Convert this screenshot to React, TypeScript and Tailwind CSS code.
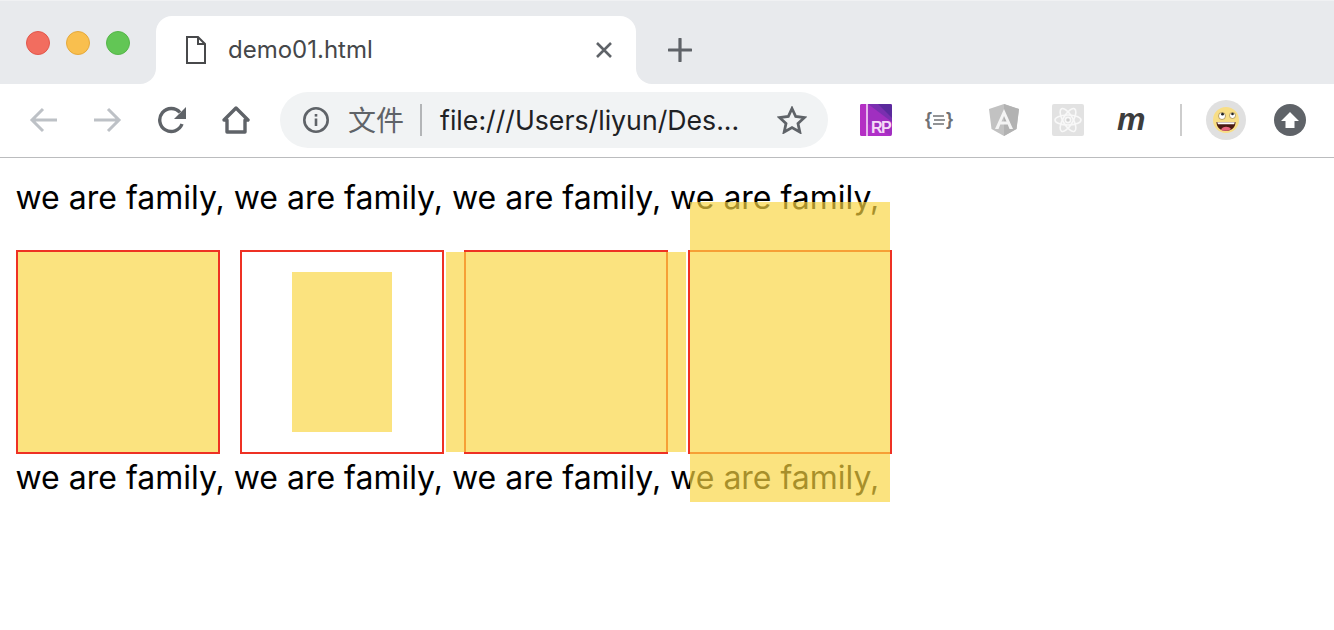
import React from "react";

const ui = "font-['Inter','Noto_Sans_CJK_SC',sans-serif]";

function Traffic({ c, b }: { c: string; b: string }) {
  return <div className="w-6 h-6 rounded-full border" style={{ backgroundColor: c, borderColor: b }} />;
}

function Box({ children }: { children?: React.ReactNode }) {
  return <div className="w-[204px] h-[204px] border-2 border-[#ee3124] shrink-0">{children}</div>;
}

const Y = "relative bg-[rgba(249,213,64,0.67)]";
const LINE = "we are family, we are family, we are family, we are family,";

export default function App() {
  return (
    <div className="w-[1334px] h-[630px] bg-white overflow-hidden font-['Inter','Noto_Sans_CJK_SC',sans-serif]">
      {/* tab strip */}
      <div className="flex h-[84px] bg-white">
        <div className="w-[156px] h-full bg-[#e8eaed] border-t border-[#f0f1f3] rounded-br-2xl flex items-start pl-[26px] pt-[30px] gap-4">
          <Traffic c="#f26d5f" b="#e2574b" />
          <Traffic c="#f9bf4e" b="#e5a93c" />
          <Traffic c="#62c655" b="#55b649" />
        </div>
        <div className="w-[480px] h-full bg-[#e8eaed] border-t border-[#f0f1f3] pt-[15px]">
          <div className="h-[68px] bg-white rounded-t-2xl flex items-center pl-[30px] pr-[24px]">
            <svg width="20" height="28" viewBox="0 0 20 28" fill="none" stroke="#48494b" strokeWidth="2">
              <path d="M1 1h11l7 7v19H1z" />
              <path d="M12 1v7h7" />
            </svg>
            <span className={`ml-[22px] text-[24px] leading-none text-[#45474a] flex-1 ${ui}`}>demo01.html</span>
            <svg width="16" height="16" viewBox="0 0 16 16" stroke="#5f6368" strokeWidth="2.6">
              <path d="M1 1l14 14M15 1L1 15" />
            </svg>
          </div>
        </div>
        <div className="flex-1 h-full bg-[#e8eaed] border-t border-[#f0f1f3] rounded-bl-2xl pl-[32px] pt-[37px]">
          <svg width="24" height="24" viewBox="0 0 24 24" stroke="#5f6368" strokeWidth="3.2" strokeLinecap="round">
            <path d="M12 1v22M1 12h22" />
          </svg>
        </div>
      </div>

      {/* toolbar */}
      <div className={`h-[74px] pb-[2px] border-b border-[#bbbcbe] flex items-center ${ui}`}>
        <div className="ml-[29px] w-7 flex justify-center">
          <svg width="28" height="26" viewBox="0 0 28 26" fill="none" stroke="#bdc1c6" strokeWidth="3" >
            <path d="M28 13H3M14 2L3 13l11 11" />
          </svg>
        </div>
        <div className="ml-[37px] w-7 flex justify-center">
          <svg width="28" height="26" viewBox="0 0 28 26" fill="none" stroke="#bdc1c6" strokeWidth="3">
            <path d="M0 13h25M14 2l11 11-11 11" />
          </svg>
        </div>
        <div className="ml-[36px]">
          <svg width="28" height="28" viewBox="0 0 28 28" fill="none">
            <path d="M24 18a11.5 11.5 0 1 1-2-11.5" stroke="#5f6368" strokeWidth="3.4" />
            <path d="M28 1v12H16z" fill="#5f6368" />
          </svg>
        </div>
        <div className="ml-9">
          <svg width="28" height="28" viewBox="0 0 28 28" fill="none" stroke="#5f6368" strokeWidth="3.4" strokeLinejoin="round">
            <path d="M2 14L14 2l12 12h-3v12H5V14z" />
          </svg>
        </div>
        <div className="ml-[30px] w-[548px] h-14 rounded-full bg-[#f1f3f4] flex items-center pl-[23px]">
          <svg width="26" height="26" viewBox="0 0 26 26" fill="none" stroke="#5f6368" strokeWidth="2.6">
            <circle cx="13" cy="13" r="11.7" />
            <path d="M13 11.5V19" />
            <path d="M13 7v2.6" />
          </svg>
          <span className="ml-[19px] -mt-[1px] text-[28px] leading-none text-[#5f6368] font-['Noto_Sans_CJK_SC',sans-serif]">文件</span>
          <div className="ml-[16px] w-[2px] h-8 bg-[#b3b5b7]" />
          <span className="ml-[18px] mt-[1px] text-[26.700px] leading-none text-[#202124] flex-1 whitespace-nowrap">file:///Users/liyun/Des...</span>
          <svg className="mr-[21px]" width="30" height="28" viewBox="0 0 30 28" fill="none" stroke="#5f6368" strokeWidth="2.8">
            <path d="M15 2.5l3.7 8 8.8 1-6.500 6 1.800 8.500-7.800-4.400-7.800 4.400 1.800-8.500-6.500-6 8.800-1z" />
          </svg>
        </div>
        <div className="ml-8 w-8 h-8 rounded-[2px] overflow-hidden">
          <svg width="32" height="32" viewBox="0 0 32 32">
            <rect width="32" height="32" fill="#a02fc0" />
            <rect width="6" height="32" fill="#b42fc4" />
            <rect x="6" width="2" height="32" fill="#e6b9ec" />
            <path d="M8 0h24v18z" fill="#7a2fb0" />
            <path d="M18 0h14v14z" fill="#5a2a9c" />
            <path d="M8 20l24 12H8z" fill="#b030c8" />
            <text x="11" y="29" fontSize="16" fontWeight="700" fill="#f4dbf7" letterSpacing="-1.500" fontFamily="Liberation Sans">RP</text>
          </svg>
        </div>
        <div className="ml-[33px] w-[28px] flex items-center justify-center">
          <span className="text-[18px] leading-none font-bold text-[#6f7174] font-['Liberation_Sans',sans-serif] -mt-[2px]">{"{"}</span>
          <svg width="12" height="12" viewBox="0 0 12 12" fill="none" stroke="#6f7174" strokeWidth="1.500" className="mx-[1px]">
            <path d="M0 2h11M1 6h11M0 10h11" />
          </svg>
          <span className="text-[18px] leading-none font-bold text-[#6f7174] font-['Liberation_Sans',sans-serif] -mt-[2px]">{"}"}</span>
        </div>
        <div className="ml-[36px] w-[30px] flex items-center justify-center">
          <svg width="30" height="32" viewBox="0 0 30 32">
            <path d="M15 0L0 5l2.500 20L15 32l12.500-7L30 5z" fill="#c2c2c2" />
            <path d="M15 0v32l12.500-7L30 5z" fill="#b2b2b2" />
            <path d="M15 5L6 25h3.500l1.800-4.500h7.400L20.500 25H24zm-2.500 12.500L15 12l2.500 5.500z" fill="#f4f4f4" />
          </svg>
        </div>
        <div className="ml-[33px] w-8 h-8 rounded-[2px] bg-[#e2e2e2] flex items-center justify-center">
          <svg width="28" height="26" viewBox="0 0 28 26" fill="none" stroke="#f8f8f8" strokeWidth="1.6">
            <ellipse cx="14" cy="13" rx="13" ry="5" />
            <ellipse cx="14" cy="13" rx="13" ry="5" transform="rotate(60 14 13)" />
            <ellipse cx="14" cy="13" rx="13" ry="5" transform="rotate(120 14 13)" />
            <circle cx="14" cy="13" r="2.600" fill="#d0d0d0" stroke="#f8f8f8" />
          </svg>
        </div>
        <span className="ml-[33px] w-[30px] text-[32px] leading-none font-bold italic text-[#3d3d3d] font-['Liberation_Sans',sans-serif] -mt-[2px]">m</span>
        <div className="ml-[33px] w-[2px] h-8 bg-[#cdcdcd]" />
        <div className="ml-[24px] w-10 h-10 rounded-full bg-[#e0e0e0] flex items-center justify-center">
          <svg width="26" height="26" viewBox="0 0 26 26">
            <circle cx="13" cy="13" r="13" fill="#f8de86" />
            <circle cx="9" cy="9" r="3.500" fill="#fff" stroke="#8a6a20" strokeWidth="0.6" />
            <circle cx="19.500" cy="8.500" r="3" fill="#fff" stroke="#8a6a20" strokeWidth="0.6" />
            <circle cx="9.500" cy="7.200" r="1.400" fill="#222" />
            <circle cx="19.500" cy="7" r="1.300" fill="#222" />
            <path d="M3.500 15h19c0 5.500-4 9-9.500 9s-9.500-3.500-9.500-9z" fill="#4a1a12" />
            <path d="M4.200 15.300h17.600l-.6 2H5z" fill="#fff" />
            <path d="M8 23c1-4 8-4 10-1-2 2-7 2.500-10 1z" fill="#e9647c" />
          </svg>
        </div>
        <div className="ml-[28px] w-8 h-8 rounded-full bg-[#5f6368] flex items-center justify-center">
          <svg width="18" height="16" viewBox="0 0 18 16">
            <path d="M9 0l9 9h-4.500v7h-9V9H0z" fill="#fff" />
          </svg>
        </div>
      </div>

      {/* page */}
      <div className="pt-4 text-black">
        <div className="h-[46px] leading-[48px] pl-[15.500px] text-[32px] whitespace-nowrap">{LINE}</div>
        <div className="flex gap-5 pl-4 mt-[30px]">
          <Box>
            <div className={`w-[200px] h-[200px] ${Y}`} />
          </Box>
          <Box>
            <div className="flex h-full items-center justify-center">
              <div className={`w-[100px] h-[160px] ${Y}`} />
            </div>
          </Box>
          <Box>
            <div className={`w-[240px] h-[200px] -ml-5 ${Y}`} />
          </Box>
          <Box>
            <div className={`w-[200px] h-[300px] -mt-[50px] ${Y}`} />
          </Box>
        </div>
        <div className="h-[46px] leading-[48px] pl-[15.500px] text-[32px] whitespace-nowrap">{LINE}</div>
      </div>
    </div>
  );
}
